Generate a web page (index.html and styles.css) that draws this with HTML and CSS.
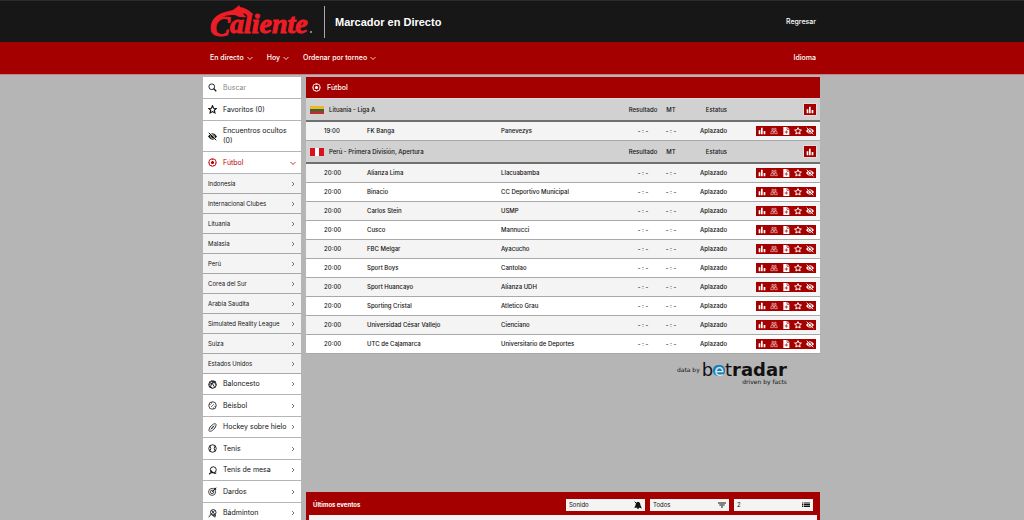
FILE: index.html
```html
<!DOCTYPE html>
<html lang="es">
<head>
<meta charset="utf-8">
<meta name="viewport" content="width=device-width, initial-scale=1">
<title>Caliente - Marcador en Directo</title>
<link rel="stylesheet" href="styles.css">
<script src="matches.js" defer></script>
</head>
<body>
<svg class="sprite" aria-hidden="true">
  <symbol id="bars" viewBox="0 0 12 12"><path d="M1 5h2.500v6H1zM4.500 1H7v10H4.500zM8.500 6H11v5H8.500z" fill="currentColor"/></symbol>
  <symbol id="pitch" viewBox="0 0 12 12"><path d="M3 2h2v3H3zM7 2h2v3H7zM2 6h3v4H1zM7 6h3l1 4H7zM5 7h2" fill="none" stroke="currentColor" stroke-width="1"/></symbol>
  <symbol id="doc" viewBox="0 0 12 12"><path d="M2 0h6l3 3v9H2z" fill="currentColor"/><path d="M7.500 0v3.500H11M6.500 5v5M4 7.500h5" fill="none" stroke="#a50000"/></symbol>
  <symbol id="star" viewBox="0 0 12 12"><path d="M6 1l1.500 3.300 3.600.3-2.700 2.400.8 3.500L6 8.700 2.800 10.500l.8-3.500L.9 4.600l3.600-.3z" fill="none" stroke="currentColor" stroke-width="1.500"/></symbol>
  <symbol id="eye" viewBox="0 0 12 12"><path d="M0 6Q6-2.500 12 6 6 14.500 0 6z" fill="currentColor"/><circle cx="6" cy="6" r="2.600" fill="none" stroke="var(--hole)" stroke-width=".9"/><path d="M2.500 1l8 8.500" stroke="var(--hole)" stroke-width=".9"/><path d="M1 1l10 10" stroke="currentColor" stroke-width="1.300"/></symbol>
  <symbol id="chev" viewBox="0 0 6 6"><path d="M2 1l2 2-2 2" fill="none" stroke="currentColor" stroke-width=".9"/></symbol>
  <symbol id="down" viewBox="0 0 6 6"><path d="M.5 2L3 4.500 5.500 2" fill="none" stroke="currentColor" stroke-width=".8"/></symbol>
  <symbol id="search" viewBox="0 0 12 12"><circle cx="5" cy="5" r="3.800" fill="none" stroke="currentColor" stroke-width="1.200"/><path d="M7.500 7.500L11 11" stroke="currentColor" stroke-width="1.700"/></symbol>
  <symbol id="soccer" viewBox="0 0 12 12"><circle cx="6" cy="6" r="5" fill="none" stroke="currentColor" stroke-width="1.200"/><path d="M6 3.800l2.200 1.600-.8 2.600H4.600l-.8-2.600zM4.500 1h3L6 2.500zM1 5l1.500 1.500L1.500 8zM11 5L9.500 6.500l1 1.500zM3 10l2-.5V11zM9 10l-2-.5V11z" fill="currentColor"/></symbol>
  <symbol id="basket" viewBox="0 0 12 12"><circle cx="6" cy="6" r="5" fill="none" stroke="currentColor" stroke-width="1.200"/><path d="M2 3Q7 4 9 10M4 1Q10 3 11 7M1 6Q6 5 10 2M3 10Q4 5 8 1M1 8l5 3" fill="none" stroke="currentColor" stroke-width="1.100"/></symbol>
  <symbol id="baseball" viewBox="0 0 12 12"><circle cx="6" cy="6" r="5" fill="none" stroke="currentColor"/><path d="M1.500 5Q5 5 5 1.500M7 10.500Q7 7 10.500 7M4 8l4-4" fill="none" stroke="currentColor" stroke-dasharray="1.500 .7"/></symbol>
  <symbol id="hockey" viewBox="0 0 12 12"><path d="M1 10Q1 5 7 1.500q3-1.500 4 .5Q11 7 5 10.500q-3 1.500-4-.5zM3.500 8.500l5-5M4 6l2 2M6 4l2 2" fill="none" stroke="currentColor"/></symbol>
  <symbol id="tennis" viewBox="0 0 12 12"><circle cx="6" cy="6" r="5" fill="none" stroke="currentColor" stroke-width="1.200"/><path d="M2.500 2.500Q5 6 2.500 9.500M9.500 2.500Q7 6 9.500 9.500" fill="none" stroke="currentColor" stroke-width="1.200"/></symbol>
  <symbol id="paddle" viewBox="0 0 12 12"><circle cx="7" cy="5" r="4" fill="none" stroke="currentColor" stroke-width="1.200"/><path d="M3.500 6l3 3H3.500L1.500 11M8 9.500h3" fill="none" stroke="currentColor" stroke-width="1.500"/></symbol>
  <symbol id="darts" viewBox="0 0 12 12"><circle cx="5.500" cy="6.500" r="4.700" fill="none" stroke="currentColor"/><circle cx="5.500" cy="6.500" r="2.300" fill="none" stroke="currentColor"/><path d="M5.500 6.500L11 1M9 1v2h2" fill="none" stroke="currentColor" stroke-width="1.300"/></symbol>
  <symbol id="shuttle" viewBox="0 0 12 12"><circle cx="7" cy="4.500" r="3.700" fill="none" stroke="currentColor" stroke-width="1.200"/><path d="M5 2l4 5M9 2L4 7M4 7l-3 4M6 8l3 3 1-3z" fill="none" stroke="currentColor" stroke-width="1.200"/></symbol>
  <symbol id="bell" viewBox="0 0 12 12"><path d="M6 1q4 1 3.500 5l2 4H.5l2-4Q2 2 6 1zM5 10h2v2H5z" fill="currentColor"/><path d="M1 1l10 10" stroke="currentColor" stroke-width="1.500"/></symbol>
  <symbol id="filter" viewBox="0 0 12 12"><path d="M0 3h12M2 6h8M4.500 9h3" stroke="currentColor" stroke-width="1.500"/></symbol>
  <symbol id="list" viewBox="0 0 12 12"><path d="M0 3h2M3 3h9M0 5.500h2M3 5.500h9M0 8h2M3 8h9" stroke="currentColor" stroke-width="1.700"/></symbol>
</svg>

<header class="top">
  <div class="wrap top-in">
    <svg class="logo" viewBox="0 0 104 36" role="img" aria-label="Caliente">
      <g class="logo-text"><text x="0" y="32" class="logo-cap">C</text><text x="20" y="29" class="logo-rest">aliente</text></g>
      <path d="M1 21Q3 10 19 7q5-1 8-4l2-2 1 2q7 1 13 7l-2 2-8-3q1 3 4 4-8 1-12-2Q12 10 8 17q-4 5-5 11z" fill="#ee1c25"/>
      <circle cx="101" cy="28" r="1" fill="#aaa"/>
    </svg>
    <h1>Marcador en Directo</h1>
    <a href="#" class="back">Regresar</a>
  </div>
</header>
<nav class="bar">
  <div class="wrap bar-in">
    <button>En directo<svg><use href="#down"/></svg></button>
    <button>Hoy<svg><use href="#down"/></svg></button>
    <button>Ordenar por torneo<svg><use href="#down"/></svg></button>
    <a href="#" class="back">Idioma</a>
  </div>
</nav>

<div class="wrap content">
  <aside>
    <label class="item search"><svg class="ic"><use href="#search"/></svg><input type="text" placeholder="Buscar" aria-label="Buscar"></label>
    <a href="#" class="item"><svg class="ic"><use href="#star"/></svg><span>Favoritos (0)</span></a>
    <a href="#" class="item two"><svg class="ic"><use href="#eye"/></svg><span>Encuentros ocultos (0)</span></a>
    <a href="#" class="item active"><svg class="ic"><use href="#soccer"/></svg><span>Fútbol</span><svg class="ch"><use href="#down"/></svg></a>
    <div class="subs">
      <a href="#">Indonesia<svg class="ch"><use href="#chev"/></svg></a>
      <a href="#">Internacional Clubes<svg class="ch"><use href="#chev"/></svg></a>
      <a href="#">Lituania<svg class="ch"><use href="#chev"/></svg></a>
      <a href="#">Malasia<svg class="ch"><use href="#chev"/></svg></a>
      <a href="#">Perú<svg class="ch"><use href="#chev"/></svg></a>
      <a href="#">Corea del Sur<svg class="ch"><use href="#chev"/></svg></a>
      <a href="#">Arabia Saudita<svg class="ch"><use href="#chev"/></svg></a>
      <a href="#">Simulated Reality League<svg class="ch"><use href="#chev"/></svg></a>
      <a href="#">Suiza<svg class="ch"><use href="#chev"/></svg></a>
      <a href="#">Estados Unidos<svg class="ch"><use href="#chev"/></svg></a>
    </div>
    <div class="sports">
      <a href="#" class="item"><svg class="ic"><use href="#basket"/></svg><span>Baloncesto</span><svg class="ch"><use href="#chev"/></svg></a>
      <a href="#" class="item"><svg class="ic"><use href="#baseball"/></svg><span>Béisbol</span><svg class="ch"><use href="#chev"/></svg></a>
      <a href="#" class="item"><svg class="ic"><use href="#hockey"/></svg><span>Hockey sobre hielo</span><svg class="ch"><use href="#chev"/></svg></a>
      <a href="#" class="item"><svg class="ic"><use href="#tennis"/></svg><span>Tenis</span><svg class="ch"><use href="#chev"/></svg></a>
      <a href="#" class="item"><svg class="ic"><use href="#paddle"/></svg><span>Tenis de mesa</span><svg class="ch"><use href="#chev"/></svg></a>
      <a href="#" class="item"><svg class="ic"><use href="#darts"/></svg><span>Dardos</span><svg class="ch"><use href="#chev"/></svg></a>
      <a href="#" class="item"><svg class="ic"><use href="#shuttle"/></svg><span>Bádminton</span><svg class="ch"><use href="#chev"/></svg></a>
    </div>
  </aside>

  <main>
    <h2><svg class="ic"><use href="#soccer"/></svg>Fútbol</h2>
    <table id="matches">
      <colgroup><col class="c-time"><col class="c-home"><col class="c-away"><col class="c-res"><col class="c-mt"><col class="c-st"><col></colgroup>
    </table>
    <div class="credit">
      <span class="by">data by</span>
      <div class="brand"><div class="name">b<span class="e">e</span>t<b>radar</b></div><div class="tag">driven by facts</div></div>
    </div>
    <section class="events">
      <div class="ev-head">
        <h3>Últimos eventos</h3>
        <button class="box">Sonido<svg><use href="#bell"/></svg></button>
        <label class="box"><select aria-label="Filtro"><option>Todos</option></select><svg><use href="#filter"/></svg></label>
        <label class="box"><select aria-label="Número de eventos"><option>2</option></select><svg><use href="#list"/></svg></label>
      </div>
      <div class="ev-body"></div>
    </section>
  </main>
</div>
</body>
</html>
```
FILE: matches.js
```js
const leagues = [
  { flag: "lt", name: "Lituania - Liga A", matches: [["19:00", "FK Banga", "Panevezys"]] },
  { flag: "pe", name: "Perú - Primera División, Apertura", matches: [
    ["20:00", "Alianza Lima", "Llacuabamba"],
    ["20:00", "Binacio", "CC Deportivo Municipal"],
    ["20:00", "Carlos Stein", "USMP"],
    ["20:00", "Cusco", "Mannucci"],
    ["20:00", "FBC Melgar", "Ayacucho"],
    ["20:00", "Sport Boys", "Cantolao"],
    ["20:00", "Sport Huancayo", "Alianza UDH"],
    ["20:00", "Sporting Cristal", "Atletico Grau"],
    ["20:00", "Universidad César Vallejo", "Cienciano"],
    ["20:00", "UTC de Cajamarca", "Universitario de Deportes"]
  ] }
];
const actions = [["bars", "Estadísticas"], ["pitch", "Alineaciones"], ["doc", "Detalles"], ["star", "Favorito"], ["eye", "Ocultar"]];
const button = ([icon, label]) =>
  `<button class="i-${icon}" aria-label="${label}"><svg><use href="#${icon}"/></svg></button>`;

document.getElementById("matches").insertAdjacentHTML("beforeend", leagues.map(l => `<tbody>
  <tr class="league"><th colspan="3"><div class="lg"><i class="flag ${l.flag}"></i>${l.name}</div></th>
  <th>Resultado</th><th>MT</th><th>Estatus</th><th><div class="stat">${button(actions[0])}</div></th></tr>
  ${l.matches.map(([time, home, away]) => `<tr><td>${time}</td><td>${home}</td><td>${away}</td>
  <td>- : -</td><td>- : -</td><td>Aplazado</td><td><div class="tools">${actions.map(button).join("")}</div></td></tr>`).join("")}
</tbody>`).join(""));
```
FILE: styles.css
```css
* { box-sizing: border-box; }
body {
  --hole: #fff;
  margin: 0;
  height: 100vh;
  overflow: hidden;
  display: flex;
  flex-direction: column;
  background: #b5b5b5;
  color: #111;
  font: 7px/10px Inter, "Liberation Sans", sans-serif;
}
a { color: inherit; text-decoration: none; }
button, input, select { font: inherit; color: inherit; border: 0; padding: 0; background: none; }
h1, h2, h3 { margin: 0; }
svg { display: block; flex: none; }
.sprite { position: absolute; width: 0; height: 0; }
.wrap { width: 100%; max-width: 618px; margin: 0 auto; padding-right: 1px; }
.back { margin-left: auto; padding-right: 4px; font-weight: 500; }

.top { background: #171717; color: #fff; border-top: 1px solid #2b2b2b; }
.top-in { display: flex; align-items: center; height: 41px; padding-left: 7px; }
.logo { width: 104px; height: 36px; overflow: visible; }
.logo-text { fill: #ee1c25; stroke: #ee1c25; stroke-width: 1; font-family: "Liberation Serif", serif; font-weight: bold; font-style: italic; }
.logo-cap { font-size: 30px; }
.logo-rest { font-size: 28px; }
.top h1 { margin-left: 10px; padding-left: 10px; border-left: 1px solid #aaa; font: bold 11px/32px "Liberation Sans", sans-serif; }

.bar { background: #a50000; color: #fff; border-bottom: 1px solid #c98080; }
.bar-in { display: flex; align-items: center; gap: 14px; height: 32px; padding-left: 7px; }
.bar button { display: flex; align-items: center; gap: 3px; font-weight: 500; }
.bar svg { width: 6px; height: 6px; }

.content { flex: 1; min-height: 0; display: flex; gap: 5px; padding-top: 2px; }
aside { width: 98px; flex: none; }
.item { display: flex; align-items: center; gap: 6px; min-height: 22px; padding: 0 5px; background: #fff; border-bottom: 1px solid #b5b5b5; }
.item span { flex: 1; min-width: 0; white-space: nowrap; }
.two { min-height: 31px; }
.two span { white-space: normal; }
.ic { width: 9px; height: 9px; }
.ch { width: 6px; height: 6px; color: #666; margin-left: auto; }
.item .ch { margin-left: -6px; }
.search input { width: 60px; outline: 0; }
.search input::placeholder { color: #888; }
.active, .active .ch { color: #b00; }
.subs a { display: flex; align-items: center; height: 20px; padding: 0 5px; background: #f4f4f4; border-bottom: 1px solid #a8a8a8; font-size: 6px; }
.sports .item:nth-child(odd) { min-height: 21px; }

main { flex: 1; min-width: 0; display: flex; flex-direction: column; }
h2 { display: flex; align-items: center; gap: 6px; height: 22px; padding-left: 6px; background: #a50000; color: #fff; border-bottom: 1px solid #d9d9d9; font-size: 7px; font-weight: 500; }
table { width: 100%; table-layout: fixed; border-collapse: separate; border-spacing: 0; font-size: 6px; line-height: 8px; }
.c-time { width: 61px; }
.c-home { width: 134px; }
.c-away { width: 125px; }
.c-res { width: 34px; }
.c-mt { width: 22px; }
.c-st { width: 45px; }
td, th { padding: 0; height: 19px; text-align: left; font-weight: 500; white-space: nowrap; vertical-align: middle; }
td { border-bottom: 1px solid #a8a8a8; background: #fff; }
tr:nth-child(even) td { background: #f4f4f4; }
td:first-child { padding-left: 18px; }
td:nth-child(4), td:nth-child(5), th:nth-child(2), th:nth-child(3) { text-align: center; }
td:nth-child(6), th:nth-child(4) { text-align: right; }
td:last-child, th:last-child { padding-right: 4px; }
.league th { height: 23px; background: #d1d1d1; border-bottom: 2px solid #707070; }
.lg { display: flex; align-items: center; gap: 5px; padding-left: 4px; }
.flag { width: 14px; height: 8px; }
.lt { background: linear-gradient(#f3b61f 33%, #1a7545 33% 66%, #bd2b33 66%); }
.pe { background: linear-gradient(90deg, #d8101f 33%, #fff 33% 66%, #d8101f 66%); }
.stat, .tools { display: grid; grid-auto-flow: column; grid-auto-columns: 1fr; align-items: center; justify-items: center; margin-left: auto; background: #a50000; color: #fff; --hole: #a50000; }
.stat { width: 12px; height: 11px; outline: 1px solid #e6dada; }
.tools { width: 60px; height: 10px; }
.tools svg, .stat svg { width: 8px; height: 8px; }
.tools .i-pitch { opacity: .75; }

.credit { display: flex; justify-content: flex-end; gap: 2px; padding: 7px 33px 0 0; font-family: "DejaVu Sans", sans-serif; font-size: 6px; }
.by { padding-top: 4px; }
.name { font-size: 18px; line-height: 17px; }
.e { display: inline-block; padding: 0 1px; border-radius: 5px; background: #1d7fb8; color: #dce6ec; font-size: 16px; line-height: 11px; }
.tag { text-align: right; line-height: 7px; }

.events { margin-top: auto; padding: 0 3px; background: #a50000; }
.ev-head { display: flex; align-items: center; gap: 5px; height: 23px; padding: 2px 4px 0; }
h3 { margin-right: auto; color: #fff; font-size: 6px; font-weight: 700; }
.box { display: flex; align-items: center; justify-content: space-between; width: 79px; height: 12px; padding: 0 3px; background: #f4f4f4; font-size: 6px; }
.box select { flex: 1; appearance: none; outline: 0; line-height: 10px; }
.box svg { width: 8px; height: 8px; }
.ev-body { height: 5px; background: #f4f4f4; }
```
